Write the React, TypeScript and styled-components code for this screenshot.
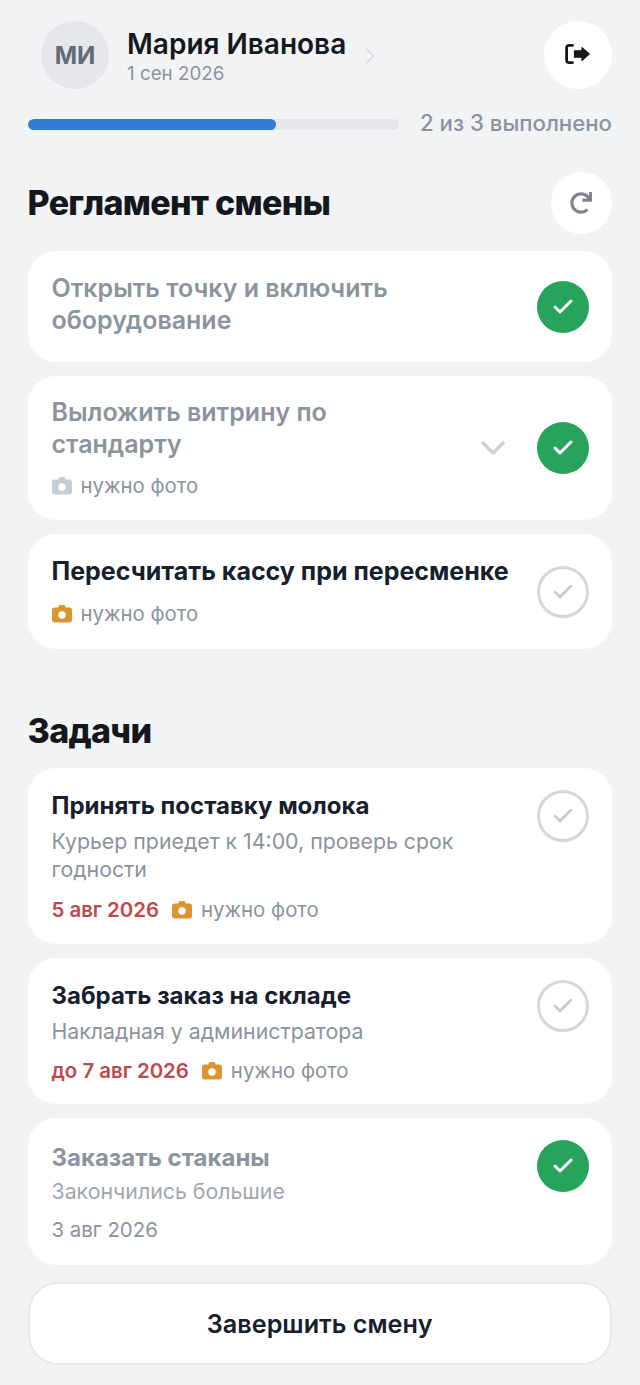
import React from "react";
import styled, { createGlobalStyle } from "styled-components";
import { ChevronRight, ChevronDown, Check } from "lucide-react";
import { FaRedo } from "react-icons/fa";

const GlobalStyle = createGlobalStyle`
    html, body {
        margin: 0;
        padding: 0;
        background: #f2f3f5;
    }
    * {
        box-sizing: border-box;
    }
`;

const Page = styled.div`
    width: 640px;
    height: 1385px;
    overflow: hidden;
    padding: 21px 28px 0 27.5px;
    font-family: Inter, "Noto Sans", sans-serif;
    color: #14181f;
`;

const Header = styled.div`
    display: flex;
    align-items: center;
    padding-left: 13.5px;
`;

const Avatar = styled.div`
    width: 68px;
    height: 68px;
    border-radius: 50%;
    background: #e5e7eb;
    color: #626b79;
    font-size: 24px;
    font-weight: 700;
    display: flex;
    align-items: center;
    justify-content: center;
`;

const UserInfo = styled.div`
    margin-left: 18px;
    display: flex;
    flex-direction: column;
    gap: 3px;
    margin-top: 2px;
`;

const UserName = styled.div`
    font-size: 28px;
    line-height: 32px;
    font-weight: 600;
    color: #14171c;
`;

const UserDate = styled.div`
    font-size: 18.8px;
    line-height: 22px;
    color: #8b939e;
`;

const Chevron = styled(ChevronRight)`
    margin-left: 10px;
    color: #dcdfe3;
    margin-top: 2px;
`;

const RoundButton = styled.button<{ $size: number }>`
    width: ${(props) => props.$size}px;
    height: ${(props) => props.$size}px;
    margin-left: auto;
    border-radius: 50%;
    border: none;
    padding: 0;
    background: #ffffff;
    display: flex;
    align-items: center;
    justify-content: center;
`;

const ProgressRow = styled.div`
    display: flex;
    align-items: center;
    gap: 21px;
    margin-top: 20px;
`;

const Track = styled.div`
    flex: 1;
    height: 10.5px;
    margin-top: 3px;
    border-radius: 6px;
    background: #e5e7eb;
    overflow: hidden;
`;

const Fill = styled.div`
    height: 100%;
    border-radius: 6px;
    background: #2f7dd4;
`;

const ProgressText = styled.div`
    font-size: 22.2px;
    line-height: 28px;
    font-weight: 500;
    color: #8b939e;
`;

const SectionHead = styled.div<{ $top: number }>`
    display: flex;
    align-items: center;
    height: 62px;
    margin-top: ${(props) => props.$top}px;
`;

const SectionTitle = styled.h2`
    margin: 0;
    font-size: 34px;
    line-height: 40px;
    font-weight: 800;
    letter-spacing: -0.7px;
    color: #14171c;
`;

const List = styled.div<{ $top: number }>`
    display: flex;
    flex-direction: column;
    gap: 14px;
    margin-top: ${(props) => props.$top}px;
`;

const Card = styled.div<{ $height: number; $center?: boolean }>`
    height: ${(props) => props.$height}px;
    background: #ffffff;
    border-radius: 28px;
    padding: ${(props) => (props.$center ? 0 : 22)}px 23.5px 0 24px;
    display: flex;
    align-items: ${(props) => (props.$center ? "center" : "flex-start")};
    gap: 12px;
`;

const CardBody = styled.div<{ $lift?: number; $push?: number }>`
    flex: 1;
    min-width: 0;
    display: flex;
    flex-direction: column;
    padding-top: ${(props) => props.$push ?? 0}px;
    padding-bottom: ${(props) => props.$lift ?? 0}px;
`;

const RuleTitle = styled.div<{ $done?: boolean }>`
    font-size: 25px;
    line-height: 31.5px;
    font-weight: ${(props) => (props.$done ? 600 : 700)};
    color: ${(props) => (props.$done ? "#8b949e" : "#16202c")};
    max-width: ${(props) => (props.$done ? "345px" : "none")};
`;

const TaskTitle = styled.div<{ $done?: boolean }>`
    font-size: 24px;
    line-height: 31px;
    font-weight: 700;
    color: ${(props) => (props.$done ? "#8b949e" : "#16202c")};
`;

const CardNote = styled.div<{ $done?: boolean }>`
    font-size: 21.3px;
    line-height: 28px;
    color: ${(props) => (props.$done ? "#a0a7b0" : "#8b939e")};
    margin-top: ${(props) => (props.$done ? 3.5 : 5.5)}px;
`;

const Meta = styled.div<{ $top: number }>`
    display: flex;
    align-items: center;
    margin-top: ${(props) => props.$top}px;
    font-size: 20.4px;
    line-height: 26px;
    color: #8b939e;
`;

const DueDate = styled.span<{ $late?: boolean }>`
    font-weight: ${(props) => (props.$late ? 600 : 400)};
    color: ${(props) => (props.$late ? "#c0484a" : "#8b939e")};
    margin-right: 13px;
`;

const PhotoLabel = styled.span`
    margin-left: 9px;
`;

const CheckCircle = styled.div<{ $done?: boolean }>`
    width: 52px;
    height: 52px;
    flex: none;
    border-radius: 50%;
    display: flex;
    align-items: center;
    justify-content: center;
    background: ${(props) => (props.$done ? "#27a35c" : "#ffffff")};
    border: ${(props) => (props.$done ? "none" : "3px solid #d3d8df")};
    color: ${(props) => (props.$done ? "#ffffff" : "#c4c9d0")};
`;

const ExpandIcon = styled(ChevronDown)`
    color: #cfd2d7;
    margin-right: 11.5px;
    flex: none;
`;

const FinishButton = styled.button`
    display: block;
    width: 100%;
    height: 83px;
    margin-top: 17px;
    border-radius: 30px;
    border: 2px solid #e7e9ed;
    background: #ffffff;
    font-family: inherit;
    font-size: 25.2px;
    font-weight: 600;
    color: #16202c;
`;

const LogoutGlyph = styled.svg`
    margin: 0 2px 2px 0;
`;

const LogoutIcon = () => (
    <LogoutGlyph width="25" height="20" viewBox="0 0 25 20" fill="none">
        <path d="M7.500 1.400H4A2.400 2.400 0 0 0 1.600 3.800v12.400A2.400 2.400 0 0 0 4 18.600h3.500" stroke="#14171c" strokeWidth="2.800" strokeLinecap="round" />
        <path d="M9.500 6.800H17V3.600L24.200 10 17 16.400V13.200H9.500z" fill="#14171c" stroke="#14171c" strokeWidth="1.200" strokeLinejoin="round" />
    </LogoutGlyph>
);

const CameraIcon = ({ color }: { color: string }) => (
    <svg width="20" height="18" viewBox="0 0 20 18">
        <path
            fillRule="evenodd"
            d="M6.600 1.400C6.900.6 7.600 0 8.500 0h3c.9 0 1.600.6 1.900 1.400l.4 1.100h3.700C19 2.500 20 3.500 20 4.900v10.200c0 1.400-1 2.400-2.500 2.400h-15C1 17.500 0 16.500 0 15.100V4.900C0 3.500 1 2.500 2.500 2.500h3.700zM10 6.300a3.700 3.700 0 1 0 0 7.400 3.700 3.700 0 0 0 0-7.400z"
            fill={color}
        />
    </svg>
);

const Photo = ({ muted }: { muted?: boolean }) => (
    <>
        <CameraIcon color={muted ? "#c5cdd6" : "#dc9530"} />
        <PhotoLabel>нужно фото</PhotoLabel>
    </>
);

const Mark = ({ done }: { done?: boolean }) => (
    <CheckCircle $done={done}>
        <Check size={24} strokeWidth={done ? 3 : 2.5} />
    </CheckCircle>
);

export default function App() {
    return (
        <Page>
            <GlobalStyle />
            <Header>
                <Avatar>МИ</Avatar>
                <UserInfo>
                    <UserName>Мария Иванова</UserName>
                    <UserDate>1 сен 2026</UserDate>
                </UserInfo>
                <Chevron size={28} strokeWidth={1.8} />
                <RoundButton $size={68}>
                    <LogoutIcon />
                </RoundButton>
            </Header>
            <ProgressRow>
                <Track>
                    <Fill style={{ width: "67%" }} />
                </Track>
                <ProgressText>2 из 3 выполнено</ProgressText>
            </ProgressRow>

            <SectionHead $top={35}>
                <SectionTitle>Регламент смены</SectionTitle>
                <RoundButton $size={61.5}>
                    <FaRedo size={22} color="#7d858f" />
                </RoundButton>
            </SectionHead>
            <List $top={17}>
                <Card $height={111} $center>
                    <CardBody $lift={4}>
                        <RuleTitle $done>Открыть точку и включить оборудование</RuleTitle>
                    </CardBody>
                    <Mark done />
                </Card>
                <Card $height={144} $center>
                    <CardBody>
                        <RuleTitle $done>Выложить витрину по стандарту</RuleTitle>
                        <Meta $top={13}><Photo muted /></Meta>
                    </CardBody>
                    <ExpandIcon size={40} strokeWidth={2.2} />
                    <Mark done />
                </Card>
                <Card $height={115} $center>
                    <CardBody>
                        <RuleTitle>Пересчитать кассу при пересменке</RuleTitle>
                        <Meta $top={14}><Photo /></Meta>
                    </CardBody>
                    <Mark />
                </Card>
            </List>

            <SectionHead $top={51}>
                <SectionTitle>Задачи</SectionTitle>
            </SectionHead>
            <List $top={6}>
                <Card $height={176}>
                    <CardBody>
                        <TaskTitle>Принять поставку молока</TaskTitle>
                        <CardNote>Курьер приедет к 14:00, проверь срок годности</CardNote>
                        <Meta $top={14.5}>
                            <DueDate $late>5 авг 2026</DueDate>
                            <Photo />
                        </Meta>
                    </CardBody>
                    <Mark />
                </Card>
                <Card $height={146}>
                    <CardBody>
                        <TaskTitle>Забрать заказ на складе</TaskTitle>
                        <CardNote>Накладная у администратора</CardNote>
                        <Meta $top={13}>
                            <DueDate $late>до 7 авг 2026</DueDate>
                            <Photo />
                        </Meta>
                    </CardBody>
                    <Mark />
                </Card>
                <Card $height={147}>
                    <CardBody $push={2}>
                        <TaskTitle $done>Заказать стаканы</TaskTitle>
                        <CardNote $done>Закончились большие</CardNote>
                        <Meta $top={12.5}>
                            <DueDate>3 авг 2026</DueDate>
                        </Meta>
                    </CardBody>
                    <Mark done />
                </Card>
            </List>
            <FinishButton>Завершить смену</FinishButton>
        </Page>
    );
}
